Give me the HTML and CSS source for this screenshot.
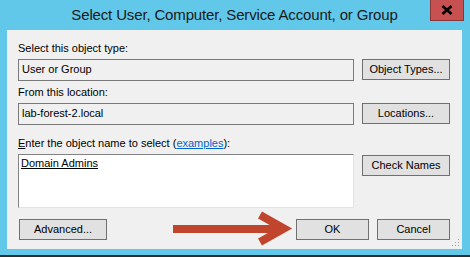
FILE: index.html
```html
<!DOCTYPE html>
<html lang="en">
<head>
    <meta charset="UTF-8">
    <meta name="viewport" content="width=device-width, initial-scale=1.0">
    <title>Select User, Computer, Service Account, or Group</title>
    <link rel="stylesheet" href="styles.css">
</head>
<body>
    <div class="window">
        <div class="titlebar">
            <span class="title">Select User, Computer, Service Account, or Group</span>
            <div class="close">
                <svg width="12" height="10" viewBox="0 0 12 10">
                    <path d="M1.5 1 L10.5 9 M10.5 1 L1.5 9" stroke="#000" stroke-width="2.6" fill="none"/>
                </svg>
            </div>
        </div>
        <div class="content">
            <div class="label">Select this object type:</div>
            <div class="row">
                <div class="field">User or Group</div>
                <div class="btn">Object Types...</div>
            </div>
            <div class="label next">From this location:</div>
            <div class="row">
                <div class="field">lab-forest-2.local</div>
                <div class="btn">Locations...</div>
            </div>
            <div class="label section"><u>E</u>nter the object name to select (<a class="link">examples</a>):</div>
            <div class="row">
                <div class="names"><u>Domain Admins</u></div>
                <div class="btn check">Check Names</div>
            </div>
            <div class="footer">
                <div class="btn advanced">Advanced...</div>
                <div class="actions">
                    <div class="btn small">OK</div>
                    <div class="btn small">Cancel</div>
                </div>
            </div>
            <!-- resize grip -->
            <svg class="grip" width="8" height="8" viewBox="0 0 8 8">
                <rect x="6" y="0" width="1" height="1" fill="#a0a0a0"/>
                <rect x="6" y="3" width="1" height="1" fill="#a0a0a0"/>
                <rect x="3" y="3" width="1" height="1" fill="#a0a0a0"/>
                <rect x="6" y="6" width="1" height="1" fill="#a0a0a0"/>
                <rect x="3" y="6" width="1" height="1" fill="#a0a0a0"/>
                <rect x="0" y="6" width="1" height="1" fill="#a0a0a0"/>
            </svg>
            <!-- red annotation arrow pointing at OK -->
            <svg class="arrow" width="122" height="36" viewBox="0 0 122 36">
                <rect x="0" y="14" width="108" height="8" fill="#c1452d"/>
                <polyline points="87,4 111,17.5 87,31" fill="none" stroke="#c1452d" stroke-width="8" stroke-linejoin="miter"/>
            </svg>
        </div>
    </div>
</body>
</html>
```

FILE: styles.css
```css
body {
    margin: 0;
    font-family: "Liberation Sans", Arial, sans-serif;
    font-size: 11px;
    color: #000;
}
.window {
    width: 470px;
    height: 257px;
    box-sizing: border-box;
    background-color: #62c8e9;
    padding: 0 8px 6px 7px;
    border-bottom: 2px solid #2d2d2d;
    display: flex;
    flex-direction: column;
}
.titlebar {
    height: 30px;
    position: relative;
    text-align: center;
}
.title {
    display: block;
    padding-top: 2px;
    font-size: 15px;
    line-height: 26px;
    letter-spacing: -0.15px;
    color: #1a1a1a;
}
.close {
    position: absolute;
    top: 0;
    right: -2px;
    width: 34px;
    height: 21px;
    box-sizing: border-box;
    background-color: #c75050;
    border: 1px solid #8a3636;
    border-top: none;
    display: flex;
    justify-content: center;
    align-items: center;
}
.content {
    flex: 1;
    position: relative;
    background-color: #f0f0f0;
    padding: 12px 12px 9px 11px;
    display: flex;
    flex-direction: column;
}
.label {
    height: 13px;
    line-height: 13px;
    margin-bottom: 4px;
    white-space: nowrap;
}
.label.next {
    margin-top: 5px;
}
.label.section {
    margin-top: 12px;
}
.link {
    color: #0066cc;
    text-decoration: underline;
}
.row {
    display: flex;
    gap: 8px;
    align-items: flex-start;
}
.field {
    flex: 1;
    height: 22px;
    box-sizing: border-box;
    border: 1px solid #7a7a7a;
    padding: 0 3px;
    line-height: 18px;
}
.btn {
    width: 88px;
    height: 21px;
    box-sizing: border-box;
    border: 1px solid #707070;
    background-color: #e1e1e1;
    text-align: center;
    line-height: 18px;
}
.btn.check {
    margin-top: 1px;
}
.names {
    flex: 1;
    height: 54px;
    box-sizing: border-box;
    background-color: #fff;
    border: 1px solid;
    border-color: #828282 #e3e3e3 #e3e3e3 #828282;
    padding: 2px 2px;
    line-height: 13px;
}
.footer {
    margin-top: 11px;
    display: flex;
    justify-content: space-between;
}
.btn.advanced {
    margin-left: 1px;
}
.actions {
    display: flex;
    gap: 8px;
}
.btn.small {
    width: 73px;
}
.grip {
    position: absolute;
    right: 2px;
    bottom: 2px;
}
.arrow {
    position: absolute;
    left: 166px;
    top: 181px;
}
```
